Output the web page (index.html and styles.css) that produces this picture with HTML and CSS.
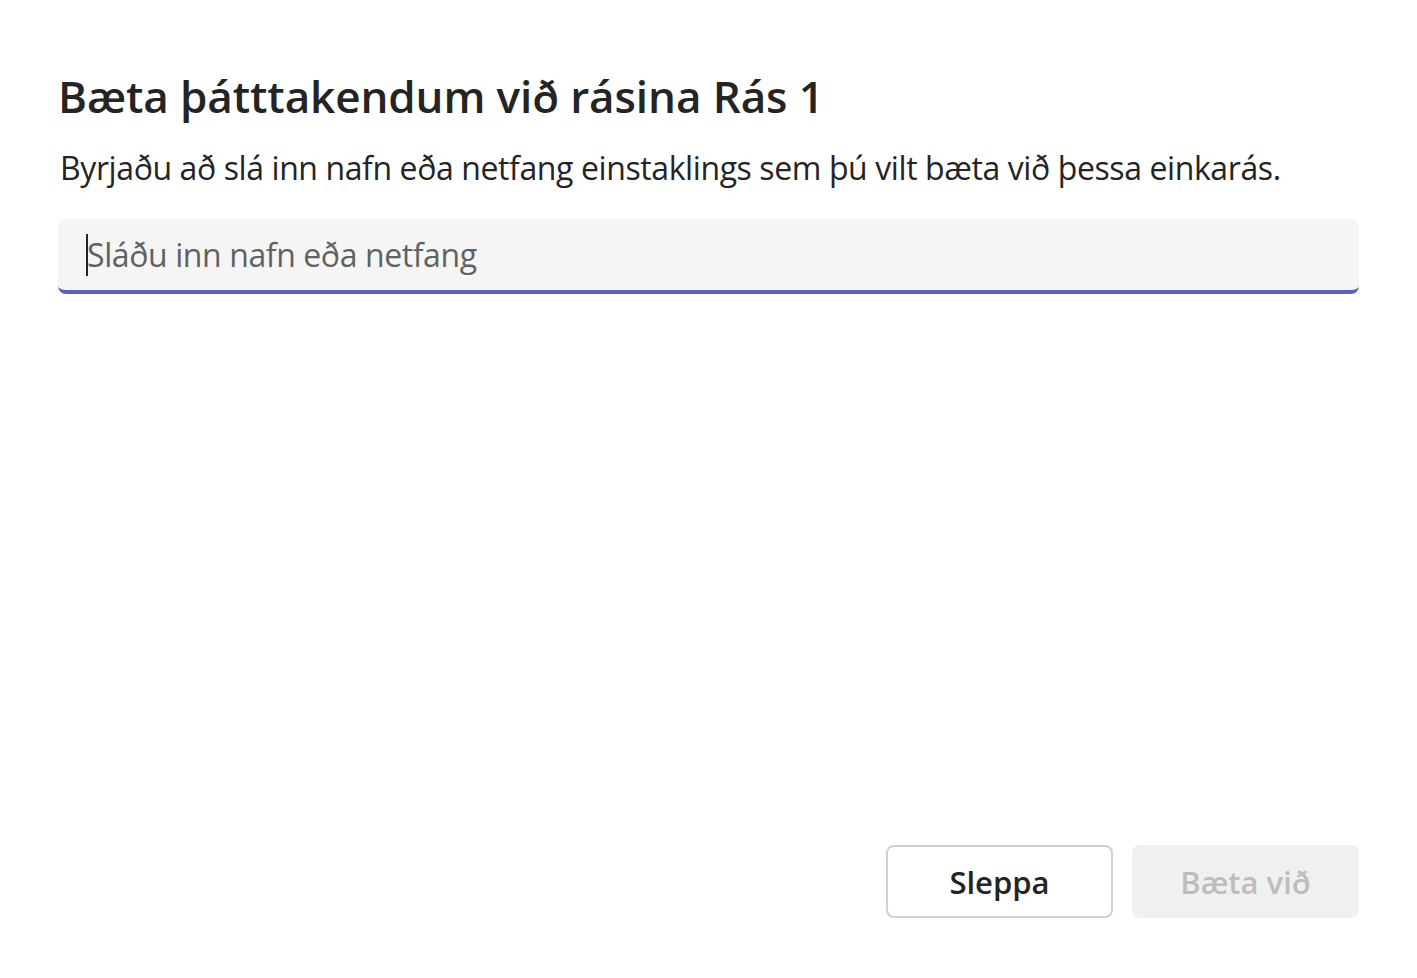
FILE: index.html
```html
<!DOCTYPE html>
<html lang="is">
<head>
<meta charset="utf-8">
<title>Bæta þátttakendum við rásina Rás 1</title>
<link rel="stylesheet" href="styles.css">
</head>
<body>
<div class="dialog">
  <h1 class="title">Bæta þátttakendum við rásina Rás 1</h1>
  <p class="desc">Byrjaðu að slá inn nafn eða netfang einstaklings sem þú vilt bæta við þessa einkarás.</p>
  <div class="field"><span class="caret"></span><span class="placeholder">Sláðu inn nafn eða netfang</span></div>
  <div class="spacer"></div>
  <div class="actions">
    <button class="btn btn-secondary" type="button">Sleppa</button>
    <button class="btn btn-disabled" type="button" disabled>Bæta við</button>
  </div>
</div>
</body>
</html>
```

FILE: styles.css
```css
html, body {
  margin: 0;
  padding: 0;
  background: #ffffff;
}
body {
  font-family: "Open Sans", "Noto Sans", "Liberation Sans", sans-serif;
  color: #242424;
}
.dialog {
  box-sizing: border-box;
  height: 978px;
  padding: 61px 58px 60px 58px;
  display: flex;
  flex-direction: column;
}
.title {
  margin: 0;
  font-size: 44px;
  font-weight: 600;
  line-height: 70px;
  letter-spacing: -0.1px;
}
.desc {
  margin: 16px 0 0 2px;
  font-size: 32px;
  font-weight: 400;
  line-height: 42px;
  letter-spacing: -0.4px;
}
.field {
  margin-top: 30px;
  box-sizing: border-box;
  height: 75px;
  background: #f5f5f5;
  border-radius: 8px;
  border-bottom: 4px solid #5b5fc7;
  display: flex;
  align-items: center;
  padding: 0 0 0 28px;
}
.caret {
  display: inline-block;
  width: 2px;
  height: 42px;
  background: #242424;
  margin-right: -1px;
}
.placeholder {
  font-size: 32px;
  color: #616161;
  letter-spacing: -0.4px;
}
.spacer {
  flex: 1;
}
.actions {
  display: flex;
  justify-content: flex-end;
  gap: 19px;
}
.btn {
  box-sizing: border-box;
  width: 227px;
  height: 73px;
  border-radius: 8px;
  font-family: inherit;
  font-size: 31px;
  font-weight: 600;
  padding: 0;
}
.btn-secondary {
  background: #ffffff;
  border: 2px solid #d1d1d1;
  color: #242424;
}
.btn-disabled {
  background: #f0f0f0;
  border: 2px solid #f0f0f0;
  color: #bdbdbd;
}
```
